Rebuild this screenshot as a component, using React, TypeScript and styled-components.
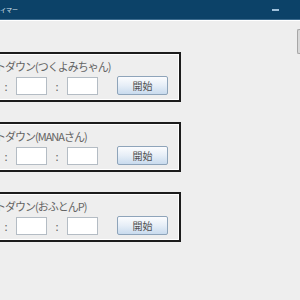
import React from 'react';
import styled, { createGlobalStyle } from 'styled-components';

const GlobalStyle = createGlobalStyle`
  html, body {
    margin: 0;
    padding: 0;
    width: 300px;
    height: 300px;
    overflow: hidden;
    background: #eeeeee;
  }
`;

const Window = styled.div`
  width: 300px;
  height: 300px;
  display: flex;
  flex-direction: column;
  font-family: "Noto Sans CJK JP", "Noto Sans", sans-serif;
  overflow: hidden;
`;

const TitleBar = styled.div`
  height: 19px;
  flex: none;
  background: #0c4268;
  border-bottom: 1px solid #3c6b8e;
  display: flex;
  align-items: center;
  justify-content: space-between;
  padding-right: 21px;
`;

const TitleText = styled.span`
  color: #d8e4ee;
  font-size: 6px;
  line-height: 19px;
  white-space: nowrap;
  margin-left: -48px;
`;

const MinimizeIcon = styled.span`
  width: 7px;
  height: 2px;
  background: #9fc0da;
`;

const Body = styled.div`
  flex: 1;
  display: flex;
  border-top: 1px solid #ffffff;
`;

const Content = styled.div`
  flex: 1;
  display: flex;
  flex-direction: column;
  gap: 20px;
  padding-top: 31px;
`;

const ScrollTrack = styled.div`
  width: 3px;
  flex: none;
  padding-top: 8px;
`;

const ScrollThumb = styled.div`
  height: 23px;
  background: #d8d8d8;
  border: 1px solid #a6a6a6;
  border-right: none;
  border-radius: 2px 0 0 2px;
`;

const Panel = styled.div`
  width: 241px;
  height: 50px;
  box-sizing: border-box;
  margin-left: -60px;
  border: 2px solid #1c1c1c;
  box-shadow: inset 0 0 0 1px #ffffff;
  padding: 4px 11px 0 23px;
  display: flex;
  flex-direction: column;
`;

const PanelLabel = styled.div`
  font-size: 11px;
  line-height: 16px;
  letter-spacing: -1px;
  color: #646464;
  white-space: nowrap;
  margin-left: 0px;
`;

const TimeRow = styled.div`
  display: flex;
  align-items: center;
  margin-top: 2px;
`;

const TimeInput = styled.input`
  width: 31px;
  height: 18px;
  box-sizing: border-box;
  border: 1px solid #b4bcc4;
  background: #ffffff;
  padding: 0 2px;
  font-size: 11px;
  outline: none;
`;

const Colon = styled.span`
  width: 20px;
  text-align: center;
  font-size: 11px;
  color: #666666;
`;

const StartButton = styled.button`
  width: 51px;
  height: 19px;
  margin-left: 19px;
  box-sizing: border-box;
  border: 1px solid #8ea4ba;
  border-radius: 2px;
  background: linear-gradient(to bottom, #fbfcfe 0%, #e6eef7 50%, #c9dbee 100%);
  font-family: "Noto Sans CJK JP", sans-serif;
  font-size: 10px;
  color: #505050;
  padding: 0;
  line-height: 17px;
`;

const panels = ['カウントダウン(つくよみちゃん)', 'カウントダウン(MANAさん)', 'カウントダウン(おふとんP)'];

export default function App() {
  return (
    <>
      <GlobalStyle />
      <Window>
        <TitleBar>
          <TitleText>カウントダウンタイマー</TitleText>
          <MinimizeIcon />
        </TitleBar>
        <Body>
          <Content>
            {panels.map((name) => (
              <Panel key={name}>
                <PanelLabel>{name}</PanelLabel>
                <TimeRow>
                  <TimeInput />
                  <Colon>:</Colon>
                  <TimeInput />
                  <Colon>:</Colon>
                  <TimeInput />
                  <StartButton type="button">開始</StartButton>
                </TimeRow>
              </Panel>
            ))}
          </Content>
          <ScrollTrack>
            <ScrollThumb />
          </ScrollTrack>
        </Body>
      </Window>
    </>
  );
}
